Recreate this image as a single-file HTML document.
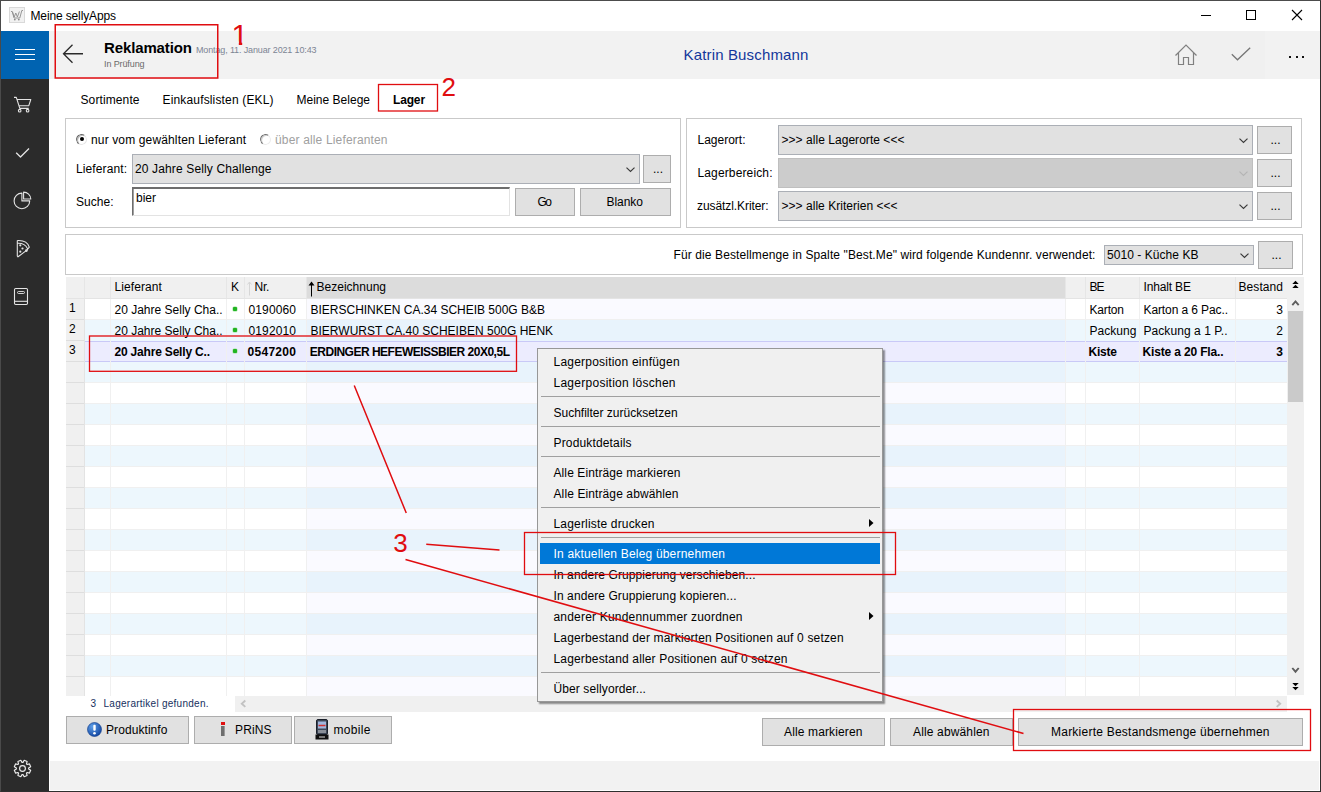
<!DOCTYPE html>
<html lang="de">
<head>
<meta charset="utf-8">
<title>Meine sellyApps</title>
<style>
*{box-sizing:border-box;margin:0;padding:0}
html,body{width:1321px;height:792px;overflow:hidden;background:#fff}
body{font-family:"Liberation Sans",sans-serif;font-size:12px;color:#000;position:relative}
.a{position:absolute}
.t{position:absolute;white-space:nowrap;line-height:16px}
.panel{position:absolute;border:1px solid #c9c9c9;background:#fff}
.combo{position:absolute;background:#e1e1e1;border:1px solid #abafb6}
.combo.dis{background:#cccccc;border-color:#bfbfbf}
.btn{position:absolute;background:#e1e1e1;border:1px solid #adadad}
svg{position:absolute;overflow:visible}
</style>
</head>
<body>
<div class="a" style="left:49px;top:31px;width:1271px;height:48px;background:#f2f2f2;"></div>
<div class="a" style="left:1160px;top:31px;width:105px;height:48px;background:#f0f0f0;"></div>
<div class="a" style="left:50px;top:761px;width:1269px;height:29px;background:#f2f2f2;"></div>
<div class="a" style="left:1px;top:31px;width:48px;height:48px;background:#0063b1;"></div>
<div class="a" style="left:1px;top:79px;width:48px;height:712px;background:#2b2b2b;"></div>
<div class="a" style="left:15px;top:49px;width:20px;height:1px;background:#fff;"></div>
<div class="a" style="left:15px;top:54px;width:20px;height:1px;background:#fff;"></div>
<div class="a" style="left:15px;top:59px;width:20px;height:1px;background:#fff;"></div>
<svg style="left:0;top:0" width="49" height="792" viewBox="0 0 49 792" fill="none" stroke="#e4e4e4" stroke-width="1.1" stroke-linejoin="round"><path d="M14 97.400h2.300l3.500 11h8.900M17.300 99.500h13.500l-2 6.200h-9.600"/><circle cx="19.700" cy="110.700" r="1.300"/><circle cx="27.600" cy="110.700" r="1.300"/><path d="M16.200 152.700L20.500 157L29 148.500" stroke-width="1.3"/><path d="M21.900 193.100A7.800 7.800 0 1 0 29.700 200.900H21.900Z"/><path d="M23.600 192.100A7.200 7.200 0 0 1 30.800 199H23.600Z"/><path d="M17.300 240.600Q27 240 29.300 247.200L26.600 250.400L18 256.800L17.300 256V240.600M17.800 243.200Q25 243 27.500 248.600"/><circle cx="26.400" cy="250.600" r="0.800"/><circle cx="20.300" cy="245.300" r="0.550"/><circle cx="22.500" cy="248.500" r="0.550"/><circle cx="20.300" cy="251.700" r="0.550"/><rect x="14.500" y="288.500" width="13" height="16" rx="1.200"/><path d="M14.500 301.300H27.500"/><rect x="17.500" y="291.500" width="7" height="2" rx="1" stroke-width="0.9"/><path d="M24.18 760.32L27.09 761.53L26.47 763.81L27.19 764.53L29.47 763.91L30.68 766.82L28.63 767.99L28.63 769.01L30.68 770.18L29.47 773.09L27.19 772.47L26.47 773.19L27.09 775.47L24.18 776.68L23.01 774.63L21.99 774.63L20.82 776.68L17.91 775.47L18.53 773.19L17.81 772.47L15.53 773.09L14.32 770.18L16.37 769.01L16.37 767.99L14.32 766.82L15.53 763.91L17.81 764.53L18.53 763.81L17.91 761.53L20.82 760.32L21.99 762.37L23.01 762.37Z" stroke-width="1.150" stroke="#ececec"/><circle cx="22.500" cy="768.500" r="2.900" stroke-width="1.150" stroke="#ececec"/></svg>
<svg style="left:9px;top:7px" width="16" height="16" viewBox="0 0 16 16"><rect x="0.5" y="0.5" width="15" height="15" fill="#f1f1f1" stroke="#d9d9d9"/><path d="M2 4.500h1.300l1.700 6.500h5.800l2-7.500h1.200M3.500 5l1.700 5l1.600-4l1.600 4l2-5.500" fill="none" stroke="#8c8c8c" stroke-width="0.9"/><circle cx="5.800" cy="12.600" r="0.900" fill="#8a8a8a"/><circle cx="9.800" cy="12.600" r="0.900" fill="#8a8a8a"/></svg>
<div class="t" style="top:7.94px;left:30.50px;letter-spacing:-0.134px;">Meine sellyApps</div>
<div class="a" style="left:1201px;top:15px;width:10px;height:1px;background:#000;"></div>
<div class="a" style="left:1246px;top:10px;width:10px;height:10px;border:1px solid #000"></div>
<svg style="left:1292px;top:10px" width="10" height="10" viewBox="0 0 10 10"><path d="M0 0L10 10M10 0L0 10" stroke="#000" stroke-width="1.1" fill="none"/></svg>
<svg style="left:62px;top:44px" width="22" height="20" viewBox="0 0 22 20"><path d="M21 9.75H1.5M10.5 0.75L1.5 9.75L10.5 18.75" fill="none" stroke="#2a2a2a" stroke-width="1.3"/></svg>
<div class="t" style="top:39.90px;left:104.00px;font-size:15px;font-weight:bold;letter-spacing:-0.125px;">Reklamation</div>
<div class="t" style="top:41.98px;left:196.00px;font-size:9px;color:#7d8594;letter-spacing:-0.138px;">Montag, 11. Januar 2021 10:43</div>
<div class="t" style="top:56.48px;left:104.00px;font-size:9px;color:#6b6b6b;letter-spacing:-0.111px;">In Prüfung</div>
<div class="t" style="top:46.90px;left:683.50px;font-size:15px;color:#13379b;letter-spacing:0.158px;">Katrin Buschmann</div>
<svg style="left:1174px;top:43px" width="24" height="23" viewBox="0 0 24 23"><path d="M1.5 12.5L12 2L22.500 12.5M4.5 9.8V21.5H9.5V14.500H14.5V21.5H19.5V9.8" fill="none" stroke="#808080" stroke-width="1.2"/></svg>
<svg style="left:1231px;top:47px" width="20" height="14" viewBox="0 0 20 14"><path d="M0.8 7.2L6.5 12.800L19.2 0.8" fill="none" stroke="#767676" stroke-width="1.3"/></svg>
<div class="a" style="left:1289px;top:56px;width:2px;height:2px;background:#111;"></div>
<div class="a" style="left:1296px;top:56px;width:2px;height:2px;background:#111;"></div>
<div class="a" style="left:1302px;top:56px;width:2px;height:2px;background:#111;"></div>
<div class="t" style="top:91.94px;left:80.50px;letter-spacing:0.111px;">Sortimente</div>
<div class="t" style="top:91.94px;left:162.50px;letter-spacing:0.158px;">Einkaufslisten (EKL)</div>
<div class="t" style="top:91.94px;left:296.50px;letter-spacing:0.011px;">Meine Belege</div>
<div class="t" style="top:91.94px;left:393.00px;font-weight:bold;letter-spacing:-0.156px;">Lager</div>
<div class="panel" style="left:65px;top:118px;width:616px;height:110px"></div>
<div class="panel" style="left:686px;top:118px;width:616px;height:110px"></div>
<div class="panel" style="left:65px;top:234px;width:1238px;height:41px"></div>
<div class="a" style="left:76px;top:134px;width:11px;height:11px;border-radius:50%;border:1px solid #6a6a6a;border-right-color:#e6e6e6;border-bottom-color:#e6e6e6;background:#fff;transform:rotate(-10deg);box-shadow:inset 1px 1px 0 #b8b8b8"></div>
<div class="a" style="left:80px;top:137px;width:4px;height:4px;background:#000;border-radius:50%"></div>
<div class="t" style="top:131.94px;left:91.00px;letter-spacing:0.139px;">nur vom gewählten Lieferant</div>
<div class="a" style="left:260px;top:134px;width:11px;height:11px;border-radius:50%;border:1px solid #747474;border-right-color:#ececec;border-bottom-color:#ececec;background:#fff;transform:rotate(-10deg);box-shadow:inset 1px 1px 0 #cfcfcf"></div>
<div class="t" style="top:131.94px;left:275.00px;color:#a0a0a0;letter-spacing:0.156px;">über alle Lieferanten</div>
<div class="t" style="top:160.94px;left:76.00px;letter-spacing:0.111px;">Lieferant:</div>
<div class="combo" style="left:132px;top:154px;width:508px;height:30px"></div>
<svg style="left:625.5px;top:167px" width="9" height="6" viewBox="0 0 9 6"><path d="M0.500 0.600L4.500 4.400L8.500 0.600" fill="none" stroke="#3a3a3a" stroke-width="1.200"/></svg>
<div class="t" style="top:160.94px;left:135.00px;letter-spacing:0.136px;">20 Jahre Selly Challenge</div>
<div class="btn" style="left:643px;top:155px;width:28px;height:28px"></div>
<div class="t" style="top:161.44px;left:653.00px;">...</div>
<div class="t" style="top:193.94px;left:76.00px;letter-spacing:0.025px;">Suche:</div>
<div class="a" style="left:132px;top:187px;width:378px;height:29px;background:#fff;border:1px solid #e3e3e3;border-top:2px solid #6d6d6d;border-left:1px solid #6d6d6d;box-shadow:inset 1px 0 0 #a0a0a0"></div>
<div class="t" style="top:190.44px;left:136.00px;">bier</div>
<div class="btn" style="left:515px;top:188px;width:60px;height:28px"></div>
<div class="t" style="top:193.94px;left:537.50px;letter-spacing:-1.500px;">Go</div>
<div class="btn" style="left:580px;top:188px;width:91px;height:28px"></div>
<div class="t" style="top:193.94px;left:606.50px;letter-spacing:-0.050px;">Blanko</div>
<div class="t" style="top:131.94px;left:697.50px;">Lagerort:</div>
<div class="combo" style="left:778px;top:125px;width:475px;height:30px"></div>
<svg style="left:1238.5px;top:138px" width="9" height="6" viewBox="0 0 9 6"><path d="M0.500 0.600L4.500 4.400L8.500 0.600" fill="none" stroke="#3a3a3a" stroke-width="1.200"/></svg>
<div class="t" style="top:131.94px;left:781.50px;letter-spacing:0.042px;">&gt;&gt;&gt; alle Lagerorte &lt;&lt;&lt;</div>
<div class="btn" style="left:1257px;top:126px;width:35px;height:28px"></div>
<div class="t" style="top:132.44px;left:1270.50px;">...</div>
<div class="t" style="top:164.94px;left:697.50px;letter-spacing:0.135px;">Lagerbereich:</div>
<div class="combo dis" style="left:778px;top:158px;width:475px;height:30px"></div>
<svg style="left:1238.5px;top:171px" width="9" height="6" viewBox="0 0 9 6"><path d="M0.500 0.600L4.500 4.400L8.500 0.600" fill="none" stroke="#b4b4b4" stroke-width="1.200"/></svg>
<div class="btn" style="left:1257px;top:159px;width:35px;height:28px"></div>
<div class="t" style="top:165.44px;left:1270.50px;">...</div>
<div class="t" style="top:197.94px;left:697.00px;letter-spacing:-0.080px;">zusätzl.Kriter:</div>
<div class="combo" style="left:778px;top:191px;width:475px;height:30px"></div>
<svg style="left:1238.5px;top:204px" width="9" height="6" viewBox="0 0 9 6"><path d="M0.500 0.600L4.500 4.400L8.500 0.600" fill="none" stroke="#3a3a3a" stroke-width="1.200"/></svg>
<div class="t" style="top:197.94px;left:781.50px;letter-spacing:0.030px;">&gt;&gt;&gt; alle Kriterien &lt;&lt;&lt;</div>
<div class="btn" style="left:1257px;top:192px;width:35px;height:28px"></div>
<div class="t" style="top:198.44px;left:1270.50px;">...</div>
<div class="t" style="top:246.94px;left:673.50px;letter-spacing:0.106px;">Für die Bestellmenge in Spalte "Best.Me" wird folgende Kundennr. verwendet:</div>
<div class="combo" style="left:1104px;top:245px;width:150px;height:20px"></div>
<svg style="left:1239.5px;top:253px" width="9" height="6" viewBox="0 0 9 6"><path d="M0.500 0.600L4.500 4.400L8.500 0.600" fill="none" stroke="#3a3a3a" stroke-width="1.200"/></svg>
<div class="t" style="top:246.94px;left:1107.00px;letter-spacing:0.054px;">5010 - Küche KB</div>
<div class="btn" style="left:1258px;top:241px;width:35px;height:28px"></div>
<div class="t" style="top:247.44px;left:1271.50px;">...</div>
<div class="a" style="left:66px;top:277px;width:1221px;height:21px;background:#f0f0f0;"></div>
<div class="a" style="left:307px;top:277px;width:759px;height:21px;background:#dcdcdc;"></div>
<div class="a" style="left:66px;top:298px;width:1221px;height:1px;background:#e4e4e4;"></div>
<div class="a" style="left:84px;top:277px;width:1px;height:21px;background:#e6e6e6;"></div>
<div class="a" style="left:110px;top:277px;width:1px;height:21px;background:#e6e6e6;"></div>
<div class="a" style="left:226px;top:277px;width:1px;height:21px;background:#e6e6e6;"></div>
<div class="a" style="left:244px;top:277px;width:1px;height:21px;background:#e6e6e6;"></div>
<div class="a" style="left:306px;top:277px;width:1px;height:21px;background:#e6e6e6;"></div>
<div class="a" style="left:1065px;top:277px;width:1px;height:21px;background:#e6e6e6;"></div>
<div class="a" style="left:1085px;top:277px;width:1px;height:21px;background:#e6e6e6;"></div>
<div class="a" style="left:1139px;top:277px;width:1px;height:21px;background:#e6e6e6;"></div>
<div class="a" style="left:1235px;top:277px;width:1px;height:21px;background:#e6e6e6;"></div>
<div class="a" style="left:1287px;top:277px;width:1px;height:21px;background:#e6e6e6;"></div>
<div class="a" style="left:85px;top:299px;width:1202px;height:21px;background:#ffffff;"></div>
<div class="a" style="left:307px;top:299px;width:759px;height:21px;background:#fafaff;"></div>
<div class="a" style="left:85px;top:319px;width:1202px;height:1px;background:#f0f0f0;"></div>
<div class="a" style="left:66px;top:299px;width:18px;height:21px;background:#f0f0f0;"></div>
<div class="a" style="left:66px;top:319px;width:18px;height:1px;background:#dedede;"></div>
<div class="a" style="left:85px;top:320px;width:1202px;height:21px;background:#edf7fd;"></div>
<div class="a" style="left:307px;top:320px;width:759px;height:21px;background:#e8f3fc;"></div>
<div class="a" style="left:66px;top:320px;width:18px;height:21px;background:#f0f0f0;"></div>
<div class="a" style="left:66px;top:340px;width:18px;height:1px;background:#dedede;"></div>
<div class="a" style="left:85px;top:341px;width:1202px;height:21px;background:#ececfe;"></div>
<div class="a" style="left:85px;top:341px;width:1202px;height:1px;background:#c9c9f7;"></div>
<div class="a" style="left:85px;top:361px;width:1202px;height:1px;background:#c9c9f7;"></div>
<div class="a" style="left:66px;top:341px;width:18px;height:21px;background:#f0f0f0;"></div>
<div class="a" style="left:66px;top:361px;width:18px;height:1px;background:#dedede;"></div>
<div class="a" style="left:85px;top:362px;width:1202px;height:21px;background:#edf7fd;"></div>
<div class="a" style="left:307px;top:362px;width:759px;height:21px;background:#e8f3fc;"></div>
<div class="a" style="left:85px;top:382px;width:1202px;height:1px;background:#f0f0f0;"></div>
<div class="a" style="left:66px;top:362px;width:18px;height:21px;background:#f0f0f0;"></div>
<div class="a" style="left:66px;top:382px;width:18px;height:1px;background:#dedede;"></div>
<div class="a" style="left:85px;top:383px;width:1202px;height:21px;background:#ffffff;"></div>
<div class="a" style="left:307px;top:383px;width:759px;height:21px;background:#fafaff;"></div>
<div class="a" style="left:85px;top:403px;width:1202px;height:1px;background:#f0f0f0;"></div>
<div class="a" style="left:66px;top:383px;width:18px;height:21px;background:#f0f0f0;"></div>
<div class="a" style="left:66px;top:403px;width:18px;height:1px;background:#dedede;"></div>
<div class="a" style="left:85px;top:404px;width:1202px;height:21px;background:#edf7fd;"></div>
<div class="a" style="left:307px;top:404px;width:759px;height:21px;background:#e8f3fc;"></div>
<div class="a" style="left:85px;top:424px;width:1202px;height:1px;background:#f0f0f0;"></div>
<div class="a" style="left:66px;top:404px;width:18px;height:21px;background:#f0f0f0;"></div>
<div class="a" style="left:66px;top:424px;width:18px;height:1px;background:#dedede;"></div>
<div class="a" style="left:85px;top:425px;width:1202px;height:21px;background:#ffffff;"></div>
<div class="a" style="left:307px;top:425px;width:759px;height:21px;background:#fafaff;"></div>
<div class="a" style="left:85px;top:445px;width:1202px;height:1px;background:#f0f0f0;"></div>
<div class="a" style="left:66px;top:425px;width:18px;height:21px;background:#f0f0f0;"></div>
<div class="a" style="left:66px;top:445px;width:18px;height:1px;background:#dedede;"></div>
<div class="a" style="left:85px;top:446px;width:1202px;height:21px;background:#edf7fd;"></div>
<div class="a" style="left:307px;top:446px;width:759px;height:21px;background:#e8f3fc;"></div>
<div class="a" style="left:85px;top:466px;width:1202px;height:1px;background:#f0f0f0;"></div>
<div class="a" style="left:66px;top:446px;width:18px;height:21px;background:#f0f0f0;"></div>
<div class="a" style="left:66px;top:466px;width:18px;height:1px;background:#dedede;"></div>
<div class="a" style="left:85px;top:467px;width:1202px;height:21px;background:#ffffff;"></div>
<div class="a" style="left:307px;top:467px;width:759px;height:21px;background:#fafaff;"></div>
<div class="a" style="left:85px;top:487px;width:1202px;height:1px;background:#f0f0f0;"></div>
<div class="a" style="left:66px;top:467px;width:18px;height:21px;background:#f0f0f0;"></div>
<div class="a" style="left:66px;top:487px;width:18px;height:1px;background:#dedede;"></div>
<div class="a" style="left:85px;top:488px;width:1202px;height:21px;background:#edf7fd;"></div>
<div class="a" style="left:307px;top:488px;width:759px;height:21px;background:#e8f3fc;"></div>
<div class="a" style="left:85px;top:508px;width:1202px;height:1px;background:#f0f0f0;"></div>
<div class="a" style="left:66px;top:488px;width:18px;height:21px;background:#f0f0f0;"></div>
<div class="a" style="left:66px;top:508px;width:18px;height:1px;background:#dedede;"></div>
<div class="a" style="left:85px;top:509px;width:1202px;height:21px;background:#ffffff;"></div>
<div class="a" style="left:307px;top:509px;width:759px;height:21px;background:#fafaff;"></div>
<div class="a" style="left:85px;top:529px;width:1202px;height:1px;background:#f0f0f0;"></div>
<div class="a" style="left:66px;top:509px;width:18px;height:21px;background:#f0f0f0;"></div>
<div class="a" style="left:66px;top:529px;width:18px;height:1px;background:#dedede;"></div>
<div class="a" style="left:85px;top:530px;width:1202px;height:21px;background:#edf7fd;"></div>
<div class="a" style="left:307px;top:530px;width:759px;height:21px;background:#e8f3fc;"></div>
<div class="a" style="left:85px;top:550px;width:1202px;height:1px;background:#f0f0f0;"></div>
<div class="a" style="left:66px;top:530px;width:18px;height:21px;background:#f0f0f0;"></div>
<div class="a" style="left:66px;top:550px;width:18px;height:1px;background:#dedede;"></div>
<div class="a" style="left:85px;top:551px;width:1202px;height:21px;background:#ffffff;"></div>
<div class="a" style="left:307px;top:551px;width:759px;height:21px;background:#fafaff;"></div>
<div class="a" style="left:85px;top:571px;width:1202px;height:1px;background:#f0f0f0;"></div>
<div class="a" style="left:66px;top:551px;width:18px;height:21px;background:#f0f0f0;"></div>
<div class="a" style="left:66px;top:571px;width:18px;height:1px;background:#dedede;"></div>
<div class="a" style="left:85px;top:572px;width:1202px;height:21px;background:#edf7fd;"></div>
<div class="a" style="left:307px;top:572px;width:759px;height:21px;background:#e8f3fc;"></div>
<div class="a" style="left:85px;top:592px;width:1202px;height:1px;background:#f0f0f0;"></div>
<div class="a" style="left:66px;top:572px;width:18px;height:21px;background:#f0f0f0;"></div>
<div class="a" style="left:66px;top:592px;width:18px;height:1px;background:#dedede;"></div>
<div class="a" style="left:85px;top:593px;width:1202px;height:21px;background:#ffffff;"></div>
<div class="a" style="left:307px;top:593px;width:759px;height:21px;background:#fafaff;"></div>
<div class="a" style="left:85px;top:613px;width:1202px;height:1px;background:#f0f0f0;"></div>
<div class="a" style="left:66px;top:593px;width:18px;height:21px;background:#f0f0f0;"></div>
<div class="a" style="left:66px;top:613px;width:18px;height:1px;background:#dedede;"></div>
<div class="a" style="left:85px;top:614px;width:1202px;height:21px;background:#edf7fd;"></div>
<div class="a" style="left:307px;top:614px;width:759px;height:21px;background:#e8f3fc;"></div>
<div class="a" style="left:85px;top:634px;width:1202px;height:1px;background:#f0f0f0;"></div>
<div class="a" style="left:66px;top:614px;width:18px;height:21px;background:#f0f0f0;"></div>
<div class="a" style="left:66px;top:634px;width:18px;height:1px;background:#dedede;"></div>
<div class="a" style="left:85px;top:635px;width:1202px;height:21px;background:#ffffff;"></div>
<div class="a" style="left:307px;top:635px;width:759px;height:21px;background:#fafaff;"></div>
<div class="a" style="left:85px;top:655px;width:1202px;height:1px;background:#f0f0f0;"></div>
<div class="a" style="left:66px;top:635px;width:18px;height:21px;background:#f0f0f0;"></div>
<div class="a" style="left:66px;top:655px;width:18px;height:1px;background:#dedede;"></div>
<div class="a" style="left:85px;top:656px;width:1202px;height:21px;background:#edf7fd;"></div>
<div class="a" style="left:307px;top:656px;width:759px;height:21px;background:#e8f3fc;"></div>
<div class="a" style="left:85px;top:676px;width:1202px;height:1px;background:#f0f0f0;"></div>
<div class="a" style="left:66px;top:656px;width:18px;height:21px;background:#f0f0f0;"></div>
<div class="a" style="left:66px;top:676px;width:18px;height:1px;background:#dedede;"></div>
<div class="a" style="left:85px;top:677px;width:1202px;height:19px;background:#ffffff;"></div>
<div class="a" style="left:307px;top:677px;width:759px;height:19px;background:#fafaff;"></div>
<div class="a" style="left:66px;top:677px;width:18px;height:19px;background:#f0f0f0;"></div>
<div class="a" style="left:110px;top:299px;width:1px;height:397px;background:#f0f0f0;"></div>
<div class="a" style="left:226px;top:299px;width:1px;height:397px;background:#f0f0f0;"></div>
<div class="a" style="left:244px;top:299px;width:1px;height:397px;background:#f0f0f0;"></div>
<div class="a" style="left:306px;top:299px;width:1px;height:397px;background:#f0f0f0;"></div>
<div class="a" style="left:1065px;top:299px;width:1px;height:397px;background:#f0f0f0;"></div>
<div class="a" style="left:1085px;top:299px;width:1px;height:397px;background:#f0f0f0;"></div>
<div class="a" style="left:1139px;top:299px;width:1px;height:397px;background:#f0f0f0;"></div>
<div class="a" style="left:1235px;top:299px;width:1px;height:397px;background:#f0f0f0;"></div>
<div class="a" style="left:84px;top:299px;width:1px;height:397px;background:#e3e3e3;"></div>
<div class="t" style="top:279.44px;left:114.50px;letter-spacing:0.094px;">Lieferant</div>
<div class="t" style="top:279.44px;left:231.00px;">K</div>
<svg style="left:247px;top:281px" width="5" height="15" viewBox="0 0 5 15"><path d="M2.5 14.5V1M0.5 3.5L2.5 1L4.5 3.5" fill="none" stroke="#d6d6d6" stroke-width="1"/></svg>
<div class="t" style="top:279.44px;left:254.50px;letter-spacing:-0.188px;">Nr.</div>
<svg style="left:308px;top:281px" width="7" height="16" viewBox="0 0 7 16"><path d="M3.5 15.5V1" stroke="#000" stroke-width="1" fill="none"/><path d="M0.5 4.5L3.5 0.5L6.5 4.5Z" fill="#000"/></svg>
<div class="t" style="top:279.44px;left:316.50px;letter-spacing:0.013px;">Bezeichnung</div>
<div class="t" style="top:279.44px;left:1089.50px;letter-spacing:-1.000px;">BE</div>
<div class="t" style="top:279.44px;left:1143.50px;letter-spacing:-0.156px;">Inhalt BE</div>
<div class="t" style="top:279.44px;left:1238.50px;letter-spacing:0.083px;">Bestand</div>
<div class="t" style="top:300.44px;left:69.00px;">1</div>
<div class="t" style="top:302.44px;left:114.50px;">20 Jahre Selly Cha..</div>
<div class="t" style="top:302.44px;left:248.50px;letter-spacing:0.125px;">0190060</div>
<div class="t" style="top:302.44px;left:310.50px;letter-spacing:-0.008px;">BIERSCHINKEN CA.34 SCHEIB 500G B&amp;B</div>
<div class="t" style="top:302.44px;left:1089.50px;letter-spacing:-0.175px;">Karton</div>
<div class="t" style="top:302.44px;left:1143.50px;letter-spacing:-0.100px;">Karton a 6 Pac..</div>
<div class="t" style="top:302.44px;right:38.00px;">3</div>
<div class="a" style="left:233px;top:307px;width:4px;height:4px;background:#22b422;border-radius:1px;box-shadow:0 0 0 0.5px #9be09b"></div>
<div class="t" style="top:321.44px;left:69.00px;">2</div>
<div class="t" style="top:323.44px;left:114.50px;">20 Jahre Selly Cha..</div>
<div class="t" style="top:323.44px;left:248.50px;letter-spacing:0.125px;">0192010</div>
<div class="t" style="top:323.44px;left:310.50px;letter-spacing:0.008px;">BIERWURST CA.40 SCHEIBEN 500G HENK</div>
<div class="t" style="top:323.44px;left:1089.50px;letter-spacing:0.042px;">Packung</div>
<div class="t" style="top:323.44px;left:1143.50px;letter-spacing:0.062px;">Packung a 1 P..</div>
<div class="t" style="top:323.44px;right:38.00px;">2</div>
<div class="a" style="left:233px;top:328px;width:4px;height:4px;background:#22b422;border-radius:1px;box-shadow:0 0 0 0.5px #9be09b"></div>
<div class="t" style="top:342.44px;left:69.00px;">3</div>
<div class="t" style="top:344.44px;left:114.50px;font-weight:bold;letter-spacing:-0.191px;">20 Jahre Selly C..</div>
<div class="t" style="top:344.44px;left:247.50px;font-weight:bold;letter-spacing:0.292px;">0547200</div>
<div class="t" style="top:344.44px;left:309.80px;font-weight:bold;letter-spacing:-0.502px;">ERDINGER HEFEWEISSBIER 20X0,5L</div>
<div class="t" style="top:344.44px;left:1088.50px;font-weight:bold;letter-spacing:-0.219px;">Kiste</div>
<div class="t" style="top:344.44px;left:1142.50px;font-weight:bold;letter-spacing:-0.158px;">Kiste a 20 Fla..</div>
<div class="t" style="top:344.44px;right:38.00px;font-weight:bold;">3</div>
<div class="a" style="left:233px;top:349px;width:4px;height:4px;background:#22b422;border-radius:1px;box-shadow:0 0 0 0.5px #9be09b"></div>
<div class="a" style="left:235px;top:696px;width:1052px;height:16px;background:#f0f0f0;"></div>
<div class="a" style="left:1287px;top:277px;width:17px;height:418px;background:#f0f0f0;"></div>
<div class="a" style="left:1288px;top:311px;width:15px;height:91px;background:#cacaca;"></div>
<svg style="left:0;top:0" width="1321" height="792" viewBox="0 0 1321 792"><path d="M1295.500 280.800L1298.700 284H1292.300ZM1295.500 284.800L1298.700 288H1292.300ZM1295.500 690.200L1298.700 687H1292.300ZM1295.500 686.200L1298.700 683H1292.300Z" fill="#000"/><path d="M1292.300 305.200L1295.500 301.500L1298.700 305.200M1292.300 668L1295.500 671.700L1298.700 668" fill="none" stroke="#5e5e5e" stroke-width="1.9"/><path d="M245.300 700.500L241.800 703.700L245.300 706.900M1276.700 700.500L1280.200 703.700L1276.700 706.900" fill="none" stroke="#c2c2c2" stroke-width="1.9"/></svg>
<div class="t" style="top:696.13px;left:90.50px;font-size:10px;color:#16305e;">3</div>
<div class="t" style="top:696.13px;left:103.50px;font-size:10px;color:#16305e;letter-spacing:0.262px;">Lagerartikel gefunden.</div>
<div class="btn" style="left:66px;top:716px;width:123px;height:28px"></div>
<div class="t" style="top:722.44px;left:106.00px;letter-spacing:0.075px;">Produktinfo</div>
<div class="btn" style="left:194px;top:716px;width:98px;height:28px"></div>
<div class="t" style="top:722.44px;left:235.00px;letter-spacing:0.125px;">PRiNS</div>
<div class="btn" style="left:294px;top:716px;width:98px;height:28px"></div>
<div class="t" style="top:722.44px;left:333.50px;letter-spacing:0.325px;">mobile</div>
<div class="btn" style="left:762px;top:718px;width:123px;height:28px"></div>
<div class="t" style="top:724.44px;left:784.00px;letter-spacing:0.135px;">Alle markieren</div>
<div class="btn" style="left:890px;top:718px;width:123px;height:28px"></div>
<div class="t" style="top:724.44px;left:913.00px;letter-spacing:0.146px;">Alle abwählen</div>
<div class="btn" style="left:1018px;top:718px;width:285px;height:28px"></div>
<div class="t" style="top:724.44px;left:1051.00px;letter-spacing:0.235px;">Markierte Bestandsmenge übernehmen</div>
<svg style="left:87px;top:722px" width="15" height="15" viewBox="0 0 15 15"><defs><radialGradient id="gb" cx="0.35" cy="0.3" r="0.8"><stop offset="0" stop-color="#5f9fe8"/><stop offset="1" stop-color="#0c3f9c"/></radialGradient></defs><circle cx="7.500" cy="7.500" r="7" fill="url(#gb)" stroke="#0a3585" stroke-width="0.6"/><rect x="6.300" y="2.800" width="2.400" height="6" rx="1" fill="#fff"/><circle cx="7.500" cy="11.300" r="1.300" fill="#fff"/></svg>
<div class="a" style="left:221px;top:722px;width:4px;height:3px;background:#e01010;"></div>
<div class="a" style="left:221px;top:726px;width:4px;height:10px;background:#6e6e6e;box-shadow:inset -1px 0 0 #9a9a9a"></div>
<svg style="left:315px;top:719px" width="14" height="21" viewBox="0 0 14 21"><rect x="1.500" y="0.5" width="11" height="15" rx="1.500" fill="#3c4656" stroke="#1a1f2a"/><rect x="3" y="2.500" width="8" height="7" fill="#9fb6de"/><path d="M3.500 6.500h7" stroke="#d03030" stroke-width="1.5"/><rect x="3" y="11" width="8" height="3" fill="#8a8f98"/><rect x="0.5" y="15.500" width="13" height="5" fill="#101010"/><rect x="4" y="17" width="6" height="2" fill="#777"/></svg>
<div class="a" style="left:537px;top:348px;width:346px;height:354px;background:#f0f0f0;border:1px solid #979797;box-shadow:2px 2px 1.5px rgba(0,0,0,0.42)"></div>
<div class="t" style="top:354.44px;left:553.50px;letter-spacing:0.220px;">Lagerposition einfügen</div>
<div class="t" style="top:375.44px;left:553.50px;letter-spacing:0.263px;">Lagerposition löschen</div>
<div class="a" style="left:541px;top:396px;width:339px;height:1px;background:#a0a0a0;"></div>
<div class="t" style="top:405.44px;left:553.50px;">Suchfilter zurücksetzen</div>
<div class="a" style="left:541px;top:426px;width:339px;height:1px;background:#a0a0a0;"></div>
<div class="t" style="top:435.44px;left:553.50px;letter-spacing:0.154px;">Produktdetails</div>
<div class="a" style="left:541px;top:456px;width:339px;height:1px;background:#a0a0a0;"></div>
<div class="t" style="top:465.44px;left:553.50px;letter-spacing:0.102px;">Alle Einträge markieren</div>
<div class="t" style="top:486.44px;left:553.50px;letter-spacing:0.107px;">Alle Einträge abwählen</div>
<div class="a" style="left:541px;top:507px;width:339px;height:1px;background:#a0a0a0;"></div>
<div class="t" style="top:516.44px;left:553.50px;letter-spacing:0.176px;">Lagerliste drucken</div>
<svg style="left:869px;top:519px" width="5" height="8" viewBox="0 0 5 8"><path d="M0 0L4.500 4L0 8Z" fill="#000"/></svg>
<div class="a" style="left:541px;top:537px;width:339px;height:1px;background:#a0a0a0;"></div>
<div class="a" style="left:540px;top:543px;width:340px;height:21px;background:#0078d7;"></div>
<div class="t" style="top:546.44px;left:553.50px;color:#fff;letter-spacing:0.192px;">In aktuellen Beleg übernehmen</div>
<div class="t" style="top:567.44px;left:553.50px;letter-spacing:0.093px;">In andere Gruppierung verschieben...</div>
<div class="t" style="top:588.44px;left:553.50px;letter-spacing:0.090px;">In andere Gruppierung kopieren...</div>
<div class="t" style="top:609.44px;left:553.50px;letter-spacing:0.196px;">anderer Kundennummer zuordnen</div>
<svg style="left:869px;top:612px" width="5" height="8" viewBox="0 0 5 8"><path d="M0 0L4.500 4L0 8Z" fill="#000"/></svg>
<div class="t" style="top:630.44px;left:553.50px;letter-spacing:0.158px;">Lagerbestand der markierten Positionen auf 0 setzen</div>
<div class="t" style="top:651.44px;left:553.50px;letter-spacing:0.159px;">Lagerbestand aller Positionen auf 0 setzen</div>
<div class="a" style="left:541px;top:672px;width:339px;height:1px;background:#a0a0a0;"></div>
<div class="t" style="top:681.44px;left:553.50px;letter-spacing:0.103px;">Über sellyorder...</div>
<svg style="left:0;top:0" width="1321" height="792" viewBox="0 0 1321 792" fill="none" stroke="#e00d10"><rect x="55.25" y="24.75" width="162.5" height="53.25" stroke-width="1.5"/><rect x="378.5" y="84.5" width="59" height="26.5" stroke-width="1.3"/><rect x="89.500" y="336" width="427" height="35.300" stroke-width="1.3"/><rect x="524.5" y="532.5" width="371" height="42" stroke-width="1.3"/><rect x="1013.500" y="709.5" width="297" height="41" stroke-width="1.3"/><path d="M354.250 385.5L406.250 513M426.250 544.250L499.500 550M405.500 559.5L1023.500 733.500" stroke-width="1.5"/></svg>
<div class="t" style="left:231.5px;top:18.57px;font-size:29.8px;line-height:32px;color:#e00d10;clip-path:polygon(0 0,100% 0,100% 23.03px,10.700px 23.03px,10.700px 100%,7.300px 100%,7.300px 23.03px,0 23.03px)">1</div>
<div class="t" style="top:71.09px;line-height:32px;left:441.50px;font-size:26px;color:#e00d10;">2</div>
<div class="t" style="top:527.09px;line-height:32px;left:393.20px;font-size:26px;color:#e00d10;">3</div>
<div class="a" style="left:0;top:0;width:1321px;height:792px;border:1px solid #2f2f2f;border-left-color:#4a4a4a;border-top-color:#4c4c4c;pointer-events:none"></div>
</body>
</html>
